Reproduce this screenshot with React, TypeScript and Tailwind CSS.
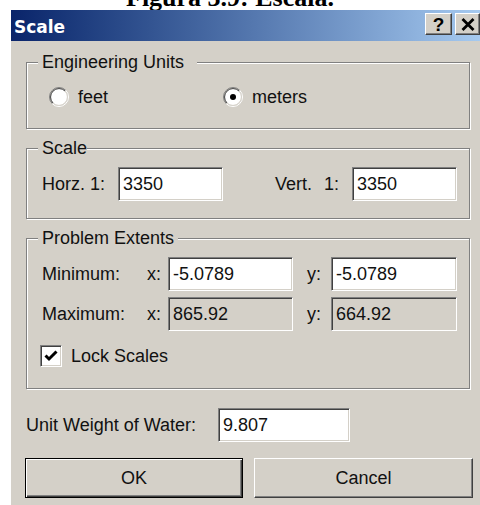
import React from 'react';

const sunken =
  'border border-t-[#808080] border-l-[#808080] border-r-white border-b-white shadow-[inset_1px_1px_0_#404040,inset_-1px_-1px_0_#d4d0c8]';

function Radio({ checked }: { checked?: boolean }) {
  return (
    <svg width="20" height="20" viewBox="0 0 20 20" className="shrink-0">
      <circle cx="10" cy="10" r="8.5" fill="#ffffff" />
      <path d="M3.28 16.72 A9.5 9.5 0 0 1 16.72 3.28" fill="none" stroke="#808080" strokeWidth="1" />
      <path d="M16.72 3.28 A9.5 9.5 0 0 1 3.28 16.72" fill="none" stroke="#ffffff" strokeWidth="1" />
      <path d="M3.99 16.01 A8.5 8.5 0 0 1 16.01 3.99" fill="none" stroke="#404040" strokeWidth="1" />
      <path d="M16.01 3.99 A8.5 8.5 0 0 1 3.99 16.01" fill="none" stroke="#d4d0c8" strokeWidth="1" />
      {checked && <circle cx="10" cy="10" r="3" fill="#000000" />}
    </svg>
  );
}

function Field({ value, className }: { value: string; className: string }) {
  return (
    <div className={`h-[34px] flex items-center pl-[4px] ${sunken} ${className}`}>
      {value}
    </div>
  );
}

function Group({
  title,
  legendClass,
  children,
  className,
}: {
  title: string;
  legendClass: string;
  children: React.ReactNode;
  className: string;
}) {
  return (
    <fieldset
      className={`ml-[15px] w-[444px] border border-[#808080] shadow-[1px_1px_0_#ffffff,inset_1px_1px_0_#ffffff] pl-[15px] pr-[11px] ${className}`}
    >
      <legend className={`-ml-[4px] pl-[4px] bg-[#d4d0c8] leading-[20px] ${legendClass}`}>{title}</legend>
      {children}
    </fieldset>
  );
}

export default function App() {
  return (
    <div className="w-[480px] h-[505px] bg-white overflow-hidden font-['Liberation_Sans',Arial,sans-serif] text-[18px] text-[#111111]">
      {/* figure caption, clipped at the top edge */}
      <div className="h-[10px] overflow-hidden">
        <div className="-mt-[15px] pl-[126px] font-['Liberation_Serif',serif] font-bold text-[26px] leading-[26px] whitespace-nowrap text-black">
          Figura 3.9: Escala.
        </div>
      </div>

      <div className="ml-[11px]">
        {/* title bar */}
        <div className="h-[31px] flex items-start bg-gradient-to-r from-[#0a246a] to-[#a6caf0]">
          <div className="pt-[7px] pl-[3px] font-['DejaVu_Sans',sans-serif] font-bold text-[17px] leading-[20px] text-white">
            Scale
          </div>
          <div className="ml-auto mt-[3px] flex gap-[3px]">
            <div className="w-[27px] h-[22px] bg-[#d4d0c8] border border-t-white border-l-white border-r-[#404040] border-b-[#404040] shadow-[inset_-1px_-1px_0_#808080] flex items-center justify-center font-bold text-[19px] leading-none text-black">
              ?
            </div>
            <div className="w-[25px] h-[22px] bg-[#d4d0c8] border border-t-white border-l-white border-r-[#404040] border-b-[#404040] shadow-[inset_-1px_-1px_0_#808080] flex items-center justify-center">
              <svg width="14" height="13" viewBox="0 0 14 13">
                <path d="M1.5 1 L12.5 12 M12.5 1 L1.5 12" stroke="#000" strokeWidth="2.8" fill="none" />
              </svg>
            </div>
          </div>
        </div>

        {/* dialog body */}
        <div className="h-[464px] bg-[#d4d0c8] pt-[11px] flex flex-col">
          <Group title="Engineering Units" legendClass="pr-[13px]" className="pb-[21px]">
            <div className="mt-[15px] h-[20px] flex items-center">
              <div className="w-[181px] flex items-center">
                <div className="ml-[7px]">
                  <Radio />
                </div>
                <span className="ml-[9px]">feet</span>
              </div>
              <div className="flex items-center">
                <Radio checked />
                <span className="ml-[9px]">meters</span>
              </div>
            </div>
          </Group>

          <Group title="Scale" legendClass="pr-[0px]" className="mt-[9px] pb-[17px]">
            <div className="mt-[9px] h-[34px] flex items-center">
              <div className="w-[76px] flex">
                <span className="w-[48px]">Horz.</span>
                <span>1:</span>
              </div>
              <Field value="3350" className="w-[105px] bg-white" />
              <div className="ml-[52px] w-[77px] flex">
                <span className="w-[49px]">Vert.</span>
                <span>1:</span>
              </div>
              <Field value="3350" className="w-[105px] bg-white" />
            </div>
          </Group>

          <Group title="Problem Extents" legendClass="pr-[4px]" className="mt-[9px] pb-[21px]">
            <div className="mt-[9px] h-[34px] flex items-center">
              <span className="w-[105px]">Minimum:</span>
              <span className="w-[21px]">x:</span>
              <Field value="-5.0789" className="w-[125px] bg-white" />
              <span className="ml-[14px] w-[24px]">y:</span>
              <Field value="-5.0789" className="w-[126px] bg-white" />
            </div>
            <div className="mt-[6px] h-[34px] flex items-center">
              <span className="w-[105px]">Maximum:</span>
              <span className="w-[21px]">x:</span>
              <Field value="865.92" className="w-[125px] bg-[#d4d0c8]" />
              <span className="ml-[14px] w-[24px]">y:</span>
              <Field value="664.92" className="w-[126px] bg-[#d4d0c8]" />
            </div>
            <div className="mt-[14px] h-[22px] flex items-center">
              <div className={`-ml-[2px] w-[22px] h-[22px] bg-white flex items-center justify-center ${sunken}`}>
                <svg width="14" height="12" viewBox="0 0 14 12">
                  <path d="M1.5 5.5 L5 9 L12.5 1.5" stroke="#000" strokeWidth="3" fill="none" />
                </svg>
              </div>
              <span className="ml-[9px]">Lock Scales</span>
            </div>
          </Group>

          <div className="mt-[19px] ml-[15px] h-[34px] flex items-center">
            <span className="w-[192px]">Unit Weight of Water:</span>
            <Field value="9.807" className="w-[132px] bg-white" />
          </div>

          <div className="mt-[16px] ml-[14px] flex">
            <div className="w-[218px] h-[40px] border border-black shadow-[inset_1px_1px_0_#ffffff,inset_-1px_-1px_0_#404040,inset_-2px_-2px_0_#808080] flex items-center justify-center">
              OK
            </div>
            <div className="ml-[11px] w-[219px] h-[40px] border border-t-white border-l-white border-r-[#404040] border-b-[#404040] shadow-[inset_-1px_-1px_0_#808080] flex items-center justify-center">
              Cancel
            </div>
          </div>
        </div>
      </div>
    </div>
  );
}
